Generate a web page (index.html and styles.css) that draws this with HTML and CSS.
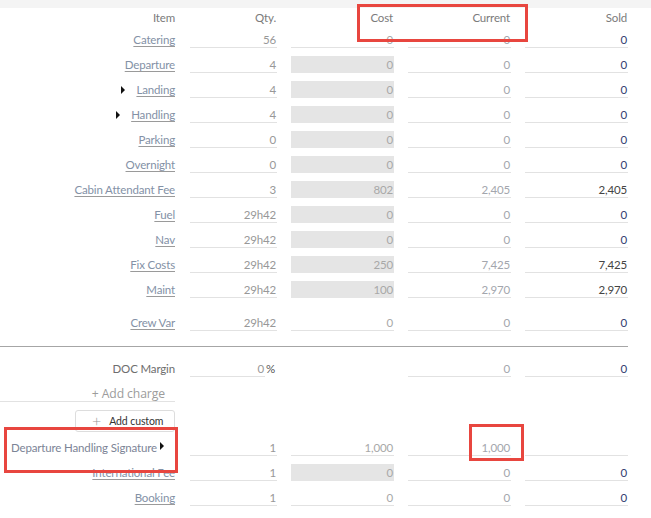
FILE: index.html
```html
<!DOCTYPE html>
<html>
<head>
<meta charset="utf-8">
<link rel="stylesheet" href="styles.css">
</head>
<body>
<div class="topband"></div>
<div class="table">
  <div class="row head">
    <div class="label">Item</div>
    <div class="cell">Qty.</div>
    <div class="cell">Cost</div>
    <div class="cell">Current</div>
    <div class="cell">Sold</div>
  </div>
  <div class="row first">
    <div class="label"><a>Catering</a></div>
    <div class="cell qty">56</div>
    <div class="cell cost">0</div>
    <div class="cell cur">0</div>
    <div class="cell sold zero">0</div>
  </div>
  <div class="row">
    <div class="label"><a>Departure</a></div>
    <div class="cell qty">4</div>
    <div class="cell cost dis">0</div>
    <div class="cell cur">0</div>
    <div class="cell sold zero">0</div>
  </div>
  <div class="row">
    <div class="label"><span class="tri"></span><a>Landing</a></div>
    <div class="cell qty">4</div>
    <div class="cell cost dis">0</div>
    <div class="cell cur">0</div>
    <div class="cell sold zero">0</div>
  </div>
  <div class="row">
    <div class="label"><span class="tri"></span><a>Handling</a></div>
    <div class="cell qty">4</div>
    <div class="cell cost dis">0</div>
    <div class="cell cur">0</div>
    <div class="cell sold zero">0</div>
  </div>
  <div class="row">
    <div class="label"><a>Parking</a></div>
    <div class="cell qty">0</div>
    <div class="cell cost dis">0</div>
    <div class="cell cur">0</div>
    <div class="cell sold zero">0</div>
  </div>
  <div class="row">
    <div class="label"><a>Overnight</a></div>
    <div class="cell qty">0</div>
    <div class="cell cost dis">0</div>
    <div class="cell cur">0</div>
    <div class="cell sold zero">0</div>
  </div>
  <div class="row">
    <div class="label"><a>Cabin Attendant Fee</a></div>
    <div class="cell qty">3</div>
    <div class="cell cost dis">802</div>
    <div class="cell cur">2,405</div>
    <div class="cell sold">2,405</div>
  </div>
  <div class="row">
    <div class="label"><a>Fuel</a></div>
    <div class="cell qty">29h42</div>
    <div class="cell cost dis">0</div>
    <div class="cell cur">0</div>
    <div class="cell sold zero">0</div>
  </div>
  <div class="row">
    <div class="label"><a>Nav</a></div>
    <div class="cell qty">29h42</div>
    <div class="cell cost dis">0</div>
    <div class="cell cur">0</div>
    <div class="cell sold zero">0</div>
  </div>
  <div class="row">
    <div class="label"><a>Fix Costs</a></div>
    <div class="cell qty">29h42</div>
    <div class="cell cost dis">250</div>
    <div class="cell cur">7,425</div>
    <div class="cell sold">7,425</div>
  </div>
  <div class="row">
    <div class="label"><a>Maint</a></div>
    <div class="cell qty">29h42</div>
    <div class="cell cost dis">100</div>
    <div class="cell cur">2,970</div>
    <div class="cell sold">2,970</div>
  </div>
  <div class="row spaced">
    <div class="label"><a>Crew Var</a></div>
    <div class="cell qty">29h42</div>
    <div class="cell cost">0</div>
    <div class="cell cur">0</div>
    <div class="cell sold zero">0</div>
  </div>
  <div class="separator"></div>
  <div class="row margin-row">
    <div class="label plain">DOC Margin</div>
    <div class="pct"><div class="cell qty pctval">0</div><span class="pctsign">%</span></div>
    <div class="blank"></div>
    <div class="cell cur">0</div>
    <div class="cell sold zero">0</div>
  </div>
  <div class="addcharge">+ Add charge</div>
  <div class="addcustom-wrap">
    <button class="addcustom"><span class="plus">+</span>Add custom</button>
  </div>
  <div class="row custom-row">
    <div class="label custom">Departure Handling Signature<span class="tri small"></span></div>
    <div class="cell qty">1</div>
    <div class="cell cost">1,000</div>
    <div class="cell cur">1,000</div>
    <div class="cell sold"></div>
  </div>
  <div class="row">
    <div class="label"><a>International Fee</a></div>
    <div class="cell qty">1</div>
    <div class="cell cost dis">0</div>
    <div class="cell cur">0</div>
    <div class="cell sold zero">0</div>
  </div>
  <div class="row">
    <div class="label"><a>Booking</a></div>
    <div class="cell qty">1</div>
    <div class="cell cost">0</div>
    <div class="cell cur">0</div>
    <div class="cell sold zero">0</div>
  </div>
</div>
<div class="mark mark-head"></div>
<div class="mark mark-label"></div>
<div class="mark mark-value"></div>
</body>
</html>
```
FILE: styles.css
```css
html, body {
  margin: 0;
  padding: 0;
  background: #fff;
}
body {
  font-family: "Lato", "Open Sans", sans-serif;
  font-size: 11.5px;
  letter-spacing: -0.15px;
  color: #888;
  position: relative;
  width: 651px;
  height: 518px;
  overflow: hidden;
}
.topband {
  height: 8px;
  background: #f4f4f4;
}
.table {
  display: flex;
  flex-direction: column;
  width: 628px;
}
.row {
  display: grid;
  grid-template-columns: 176px 87px 103px 103px 103px;
  column-gap: 14px;
  margin-top: 8px;
  height: 17px;
}
.row.head {
  margin-top: 1px;
  height: 17px;
}
.row.first {
  margin-top: 5px;
}
.row.spaced {
  margin-top: 16px;
}
.head .label, .head .cell {
  border-bottom: none;
  color: #7b7b7b;
  padding-right: 1px;
}
.label {
  text-align: right;
  line-height: 16px;
  padding-top: 1px;
  height: 16px;
  padding-right: 1px;
  white-space: nowrap;
  display: flex;
  justify-content: flex-end;
  align-items: center;
}
.label a {
  color: #8391a6;
  text-decoration: underline;
  text-decoration-color: #9a9a9a;
  text-underline-offset: 2px;
}
.label.plain {
  color: #6e6e6e;
}
.tri {
  display: inline-block;
  width: 0;
  height: 0;
  border-top: 4px solid transparent;
  border-bottom: 4px solid transparent;
  border-left: 4px solid #111;
  margin-right: 11px;
}
.cell {
  text-align: right;
  line-height: 16px;
  padding-top: 1px;
  height: 15px;
  border-bottom: 1px solid #e2e2e2;
  padding-right: 1px;
  white-space: nowrap;
}
.head .cell {
  height: 16px;
}
.qty {
  color: #989898;
}
.cost {
  color: #a8a8a8;
}
.cost.dis {
  background: #e5e5e5;
  border-bottom-color: #e5e5e5;
}
.cur {
  color: #a3a6ad;
}
.sold {
  color: #444;
}
.sold.zero {
  color: #333d70;
}
.separator {
  height: 1px;
  background: #a6a6a6;
  margin-top: 15px;
  width: 628px;
}
.row.margin-row {
  margin-top: 13px;
}
.pct {
  display: flex;
  align-items: flex-start;
}
.pctval {
  width: 74px;
}
.pctsign {
  color: #555;
  line-height: 16px;
  padding-top: 1px;
  margin-left: 1px;
}
.addcharge {
  margin-top: 6px;
  width: 165px;
  padding-right: 10px;
  padding-top: 3px;
  height: 15px;
  text-align: right;
  font-family: "Open Sans", sans-serif;
  font-size: 12.2px;
  letter-spacing: -0.1px;
  line-height: 16px;
  color: #9c9c9c;
  border-bottom: 1px solid #e2e2e2;
}
.addcustom-wrap {
  margin-top: 8px;
  padding-left: 75px;
}
.addcustom {
  width: 100px;
  height: 22px;
  border: 1px solid #ddd;
  border-radius: 3px;
  background: #fff;
  font-family: "Lato", "Open Sans", sans-serif;
  font-size: 10.5px;
  letter-spacing: -0.1px;
  color: #333;
  padding: 0 0 0 16px;
  display: flex;
  align-items: center;
  cursor: pointer;
}
.plus {
  color: #999;
  font-size: 16px;
  font-weight: 300;
  margin-right: 8px;
  line-height: 14px;
}
.row.custom-row {
  margin-top: 7px;
}
.label.custom {
  justify-content: flex-start;
  padding-left: 11px;
  color: #7c8496;
  align-items: center;
}
.tri.small {
  margin: -4px 0 0 3px;
}
.mark {
  position: absolute;
  border: 3px solid #e8463f;
  box-sizing: border-box;
}
.mark-head {
  left: 357px;
  top: 4px;
  width: 171px;
  height: 38px;
}
.mark-label {
  left: 4px;
  top: 427px;
  width: 174px;
  height: 46px;
}
.mark-value {
  left: 469px;
  top: 424px;
  width: 55px;
  height: 37px;
}
```
